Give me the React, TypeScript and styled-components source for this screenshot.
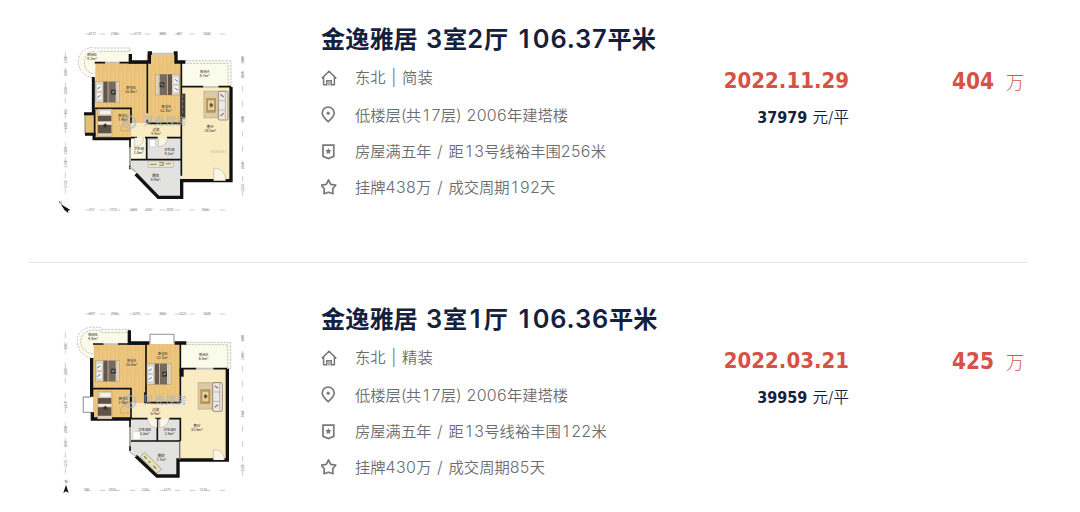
import React from "react";
import styled, { createGlobalStyle } from "styled-components";

const GlobalStyle = createGlobalStyle`
  * {
    box-sizing: border-box;
  }

  body {
    margin: 0;
    background: #fff;
    font-family: Inter, "Noto Sans CJK SC", sans-serif;
  }
`;

const Page = styled.main`
  width: 1080px;
  height: 512px;
  padding: 0 52px 0 28px;
  overflow: hidden;
`;

const Row = styled.article`
  display: flex;
  height: 263px;
  padding-left: 22px;
  border-bottom: 1px solid #e9e9e9;

  & + & {
    margin-top: 17px;
    height: 232px;
    border-bottom: 0;
  }
`;

const PlanBox = styled.svg`
  flex: none;
  width: 210px;
  height: 200px;
  margin: 20px 61px 0 0;
`;

const Info = styled.div`
  width: 378px;
  padding-top: 19px;
`;

const Title = styled.h2`
  margin: 0;
  height: 40px;
  line-height: 40px;
  color: #14213d;
  font-size: 24.2px;
  font-weight: 700;
  white-space: nowrap;
`;

const TitleLatin = styled.span`
  font-size: 25.4px;
  font-weight: 600;
  letter-spacing: 0.85px;
  word-spacing: 1px;
  white-space: pre;
`;

const Lines = styled.ul`
  display: grid;
  grid-template-rows: 37px 38px 35px 36px;
  margin: 0;
  padding: 0;
  list-style: none;
`;

const Line = styled.li`
  display: flex;
  align-items: center;
  gap: 18px;
  line-height: 24px;
  color: #6c6d70;
  font-size: 15.3px;
  font-weight: 350;
  white-space: nowrap;
`;

const LineLatin = styled.span`
  font-size: 16px;
  font-weight: 300;
  letter-spacing: 0.3px;
  word-spacing: 0.8px;
  white-space: pre;
`;

// Gives the narrow "1" the same advance as the other digits
const One = styled.span`
  display: inline-block;
  width: 0.65em;
  text-align: center;
`;

const Paren = styled.span`
  margin-right: -1px;
`;

const Icon = styled.svg`
  flex: none;
  width: 16px;
  height: 18px;
  fill: none;
  stroke: #77787a;
  stroke-width: 1.7;
`;

const Deal = styled.div`
  width: 150px;
  padding-top: 66px;
  text-align: right;
`;

const DealDate = styled.div`
  height: 30px;
  line-height: 30px;
  color: #d65247;
  font-family: "DejaVu Sans Condensed", "DejaVu Sans", sans-serif;
  font-stretch: condensed;
  font-weight: 700;
  font-size: 22px;
`;

const UnitPrice = styled.div`
  height: 44px;
  line-height: 43px;
  color: #14213d;
  font-size: 15.5px;
  font-weight: 350;

  b {
    font-family: "DejaVu Sans Condensed", "DejaVu Sans", sans-serif;
    font-stretch: condensed;
    font-size: 16px;
    font-weight: 700;
    margin-right: 1px;
  }
`;

const Total = styled.div`
  width: 175px;
  padding-top: 66px;
  line-height: 30px;
  text-align: right;
  color: #d65247;
  font-size: 18px;
  font-weight: 300;

  b {
    margin-right: 12px;
    font-family: "DejaVu Sans Condensed", "DejaVu Sans", sans-serif;
    font-stretch: condensed;
    font-size: 22.4px;
    font-weight: 700;
  }
`;

type Listing = {
  title: string;
  lines: string[];
  date: string;
  unit: string;
  total: string;
  plan: React.ReactNode;
};

const spaced = (text: string) =>
  text.split(/([1()])/).map((part, i) => {
    if (part === "1") return <One key={i}>1</One>;
    if (part === "(" || part === ")") return <Paren key={i}>{part}</Paren>;
    return part;
  });

// Latin runs are set slightly larger than the Chinese around them
const mix = (text: string, Latin: React.ElementType) =>
  text
    .split(/([\x20-\x7e]+)/)
    .filter(Boolean)
    .map((part, i) => (/^[\x20-\x7e]/.test(part) ? <Latin key={i}>{spaced(part)}</Latin> : part));

const icons = [
  <Icon viewBox="0 0 16 18" key="home">
    <path d="M.8 9.4 8 2.3l7.2 7.1M2.6 8.2v7.6h3.2M13.4 8.200v7.600h-3.200M5.800 16.400v-4.600h4.400v4.600" strokeWidth="1.5" />
    <path d="M8 13v3.400" strokeWidth="1.2" />
  </Icon>,
  <Icon viewBox="0 0 16 18" key="pin">
    <path d="M7.2 15.7C4.3 13 1.2 10.4 1.2 7a6 6 0 0 1 12 0c0 3.4-3.1 6-6 8.7Z" />
    <circle cx="7.2" cy="7.2" r="1.6" fill="#77787a" stroke="none" />
  </Icon>,
  <Icon viewBox="0 0 16 18" key="badge">
    <path d="M2 2.2h10.8v11.2l-5.4 2.2L2 13.4Z" />
    <path d="m7.4 5 .9 1.9 2.2.3-1.6 1.5.4 2.2-1.9-1-1.9 1 .4-2.2-1.6-1.5 2.2-.3Z" fill="#77787a" stroke="none" />
  </Icon>,
  <Icon viewBox="0 0 16 18" key="star">
    <path d="m7.5 2 2.2 4.4 5 .8-3 3.5.3 5-4.500-1.400L3 15.700l.3-5-3-3.500 5-.8Z" strokeLinejoin="round" />
  </Icon>,
];

const Label = ({ x, y, name, area }: { x: number; y: number; name: string; area: string }) => (
  <g fill="#40392f" fontSize="10.5" fontWeight="500" textAnchor="middle" fontFamily='"Noto Sans CJK SC", sans-serif'>
    <text x={x} y={y}>{name}</text>
    <text x={x} y={y + 12}>{area}</text>
  </g>
);

const Bed = ({ x, y, flip = false, w = 72, h = 62 }: { x: number; y: number; flip?: boolean; w?: number; h?: number }) => (
  <g transform={`translate(${flip ? x + w : x} ${y}) scale(${((flip ? -1 : 1) * w) / 72} ${h / 62})`}>
    <rect width="72" height="62" fill="#e4d8c4" stroke="#a99370" strokeWidth="1.5" />
    <rect x="2" y="7" width="18" height="22" rx="4" fill="#f8f7f2" stroke="#8b887f" />
    <rect x="2" y="33" width="18" height="22" rx="4" fill="#f8f7f2" stroke="#8b887f" />
    <path d="M5 22 14 15M5 48l9-7" stroke="#78a4b9" strokeWidth="4" />
    <rect x="23" width="13" height="62" fill="#64564a" />
    <rect x="38" width="22" height="62" fill="#756a5e" />
    <rect x="46" y="24" width="14" height="15" fill="#383634" />
    <path d="m50 34 6-6" stroke="#ddd" strokeWidth="3" />
    <path d="M64 0v62" stroke="#c9b593" strokeWidth="2" />
  </g>
);

const SmallBed = ({ y }: { y: number }) => (
  <g>
    <rect x="143" y={y} width="43" height="83" fill="#ded0bb" stroke="#927d61" />
    <rect x="149" y={y + 4} width="34" height="13" rx="3" fill="#f8f4eb" stroke="#aaa08d" />
    <path d={`M144 ${y + 20}h40v17h-40zM144 ${y + 48}h40v25h-40z`} fill="#5f5147" />
    <path d={`M144 ${y + 39}h40v5h-40z`} fill="#f3eee3" />
    <path d={`m158 ${y + 50} 8-7 7 7-7 7z`} fill="#36332f" />
  </g>
);

const Sofa = ({ x, y }: { x: number; y: number }) => (
  <g>
    <rect x={x} y={y} width="70" height="83" fill="#d0bc96" />
    <rect x={x + 4} y={y + 4} width="42" height="75" fill="#dccaa5" />
    <rect x={x + 9} y={y + 23} width="28" height="42" fill="#bd954e" stroke="#9a7a42" />
    <rect x={x + 14} y={y + 29} width="18" height="29" fill="#e5d0a0" />
    <path d={`m${x + 23} ${y + 36} 7 7-7 8-5-8z`} fill="#665032" />
    <rect x={x + 45} y={y + 2} width="29" height="86" rx="4" fill="#eee8e4" stroke="#6e6258" strokeWidth="2" />
    <path d={`M${x + 66} ${y + 4}v81M${x + 47} ${y + 30}h19M${x + 47} ${y + 58}h19`} stroke="#897c74" strokeWidth="1.5" />
    <path d={`m${x + 51} ${y + 11} 10 8M${x + 51} ${y + 76}l10-8`} stroke="#9b7770" strokeWidth="4" />
  </g>
);

const Watermark = ({ y }: { y: number }) => (
  <g fill="none" stroke="#a3b9ce" opacity=".65">
    <circle cx="239" cy={y} r="18" strokeWidth="6" />
    <path d={`m229 ${y} 9 9 17-16`} strokeWidth="5" />
    <text x="279" y={y + 8} fill="#a3b9ce" stroke="none" fontSize="30" fontWeight="700" textLength="130" fontFamily='"Noto Sans CJK SC", sans-serif'>贝壳找房</text>
  </g>
);

type Ruler = [number, string][];

const Rulers = ({ top, bottom, left, right, bottomY }: { top: Ruler; bottom: Ruler; left: Ruler; right: Ruler; bottomY: number }) => (
  <g fill="#777" fontSize="9.5" textAnchor="middle" fontFamily='"Liberation Sans", sans-serif'>
    <path
      d={`M104 42h432M104 ${bottomY}h428M46 98V543M578 108V528`}
      stroke="#999"
      strokeWidth="1.5"
      strokeDasharray="17 28"
      fill="none"
    />
    {top.map(([x, t]) => <text key={x} x={x} y="45">{t}</text>)}
    {bottom.map(([x, t]) => <text key={x} x={x} y={bottomY + 3}>{t}</text>)}
    {left.map(([y, t]) => <text key={y} transform={`translate(50 ${y}) rotate(-90)`}>{t}</text>)}
    {right.map(([y, t]) => <text key={y} transform={`translate(581 ${y}) rotate(-90)`}>{t}</text>)}
  </g>
);

const WoodDefs = ({ id }: { id: string }) => (
  <defs>
    <pattern id={id} width="24" height="70" patternUnits="userSpaceOnUse">
      <rect width="24" height="70" fill="#ebc47c" />
      <path d="M3 0v70M15 0v70" stroke="#e7bd70" strokeWidth="2" />
      <path d="M9 0v70M21 18v52" stroke="#efcb88" strokeWidth="2" />
    </pattern>
  </defs>
);

const planA = (
  <PlanBox viewBox="0 0 630 600">
    <WoodDefs id="woodA" />
    <Rulers
      top={[[127, "4172"], [193, "2283"], [263, "2179"], [338, "3885"], [389, "827"], [471, "5532"]]}
      bottom={[[126, "757"], [189, "2727"], [251, "2096"], [297, "1292"], [359, "1828"], [465, "5800"]]}
      left={[[120, "1288"], [158, "2687"], [213, "2850"], [275, "826"], [317, "2300"], [392, "1308"], [432, "2174"], [492, "2756"]]}
      right={[[120, "3800"], [165, "2028"], [298, "5880"], [437, "2528"], [503, "3254"]]}
      bottomY={570}
    />
    <path d="M132 168c-58-12-61-72 1-78h108v38H134v43Z" fill="#fbfae9" />
    <path d="M128 82c-59 4-57 85 2 91m4-80c-42 4-40 66-1 69" fill="none" stroke="#aaa" strokeWidth="2" strokeDasharray="7 3" />
    <path d="M132 84h108v10H145" fill="none" stroke="#aaa" strokeWidth="2" strokeDasharray="7 3" />
    <path d="M395 122h148v79H395Z" fill="#fbfbea" stroke="#aaa" strokeWidth="2" strokeDasharray="7 3" />
    <path d="M399 130h135v71" fill="none" stroke="#aaa" strokeWidth="2" strokeDasharray="7 3" />
    <path d="M136 128h154v182h-47v45H134v-86h2Z" fill="url(#woodA)" />
    <path d="M290 103h90v24h13v182H290Z" fill="url(#woodA)" />
    <path d="M243 310h150V202h144v278H393V354H243Z" fill="#f9ebc2" />
    <path d="M105 284h28v56h-28Z" fill="#e5be78" stroke="#8f8168" strokeWidth="3" />
    <path d="M243 355h47v64h-47Z" fill="#faf9e5" />
    <path d="M290 355h103v64H290ZM243 419h150v112h-67l-68-70-16-12Z" fill="#e2e2e1" />
    <g fill="none" stroke="#111">
      <path d="M130 171v110h-28M105 343h27v13h111" strokeWidth="9" />
      <path d="M241 102v24h57V99h8M371 99h7v27h28M543 201v281H395v50h-70l-68-70" strokeWidth="10" />
      <path d="M134 128h31m43 0h82M292 130v150m0 19v10m0 1h102V128M395 200h65m45 0h38M134 265h109v45M134 269v80M243 353h18m24 0h38m28 0h43v66m-104-65v65m-47 0h151m0-65V310m0 109v48M240 354v94" strokeWidth="5" />
    </g>
    <path d="M165 128h43M306 101h66M460 201h45M240 382v55M258 455l-18-14" stroke="#c2c0b7" strokeWidth="5" />
    <rect x="391" y="221" width="15" height="74" fill="#403a34" />
    <path d="M398 225v60" stroke="#81786b" strokeWidth="3" strokeDasharray="10 5" />
    <Bed x={137} y={185} />
    <Bed x={317} y={163} flip />
    <SmallBed y={267} />
    <Sofa x={460} y={212} />
    <path d="M491 482v-37c22-2 35 13 36 37M254 353v27c15 0 27-10 27-27M325 354v27c15-1 26-10 27-27" fill="#faf5e5" stroke="#aca38c" strokeWidth="1.5" />
    <path d="M243 302c-20 0-31 12-31 30h31" fill="none" stroke="#b3925a" strokeWidth="1.5" />
    <rect x="299" y="359" width="17" height="22" fill="#fff" stroke="#999" />
    <rect x="294" y="423" width="76" height="19" fill="#e8e4ce" stroke="#8a877a" />
    <path d="M300 433h20m8-5h12v8h-12m20-5h14" fill="none" stroke="#8b8560" strokeWidth="3" />
    <path d="M483 395h48" stroke="#c9c3ae" strokeWidth="8" strokeDasharray="3 4" />
    <Watermark y={307} />
    <Label x={126} y={107} name="阳台B" area="4.2m²" />
    <Label x={243} y={208} name="卧室B" area="15.0m²" />
    <Label x={348} y={263} name="卧室A" area="13.7m²" />
    <Label x={464} y={160} name="阳台A" area="6.7m²" />
    <Label x={219} y={291} name="卧室C" area="7.4m²" />
    <Label x={481} y={324} name="客厅" area="28.5m²" />
    <Label x={318} y={333} name="过道" area="4.9m²" />
    <Label x={266} y={391} name="卫生间" area="1.8m²" />
    <Label x={358} y={393} name="卫生间" area="4.2m²" />
    <Label x={317} y={471} name="厨房" area="8.9m²" />
    <circle cx="47" cy="566" r="15" fill="none" stroke="#ddd" />
    <path d="m32 552 29 18-7 2 1 7-11-8Z" fill="#111" />
    <text x="27" y="553" fontSize="11" fill="#333">N</text>
  </PlanBox>
);

const planB = (
  <PlanBox viewBox="0 0 630 600">
    <WoodDefs id="woodB" />
    <Rulers
      top={[[125, "1687"], [193, "2890"], [260, "1295"], [338, "2850"], [399, "1025"], [471, "5528"]]}
      bottom={[[111, "985"], [186, "2858"], [285, "2274"], [352, "1475"], [460, "5574"]]}
      left={[[137, "1807"], [215, "3508"], [314, "2470"], [389, "2880"], [432, "1067"], [490, "2275"]]}
      right={[[115, "1888"], [169, "2607"], [341, "5742"], [504, "1588"]]}
      bottomY={571}
    />
    <path d="M128 171c-58-11-60-75 3-81h107v40H131v44Z" fill="#fbfae9" />
    <path d="M154 84c-93-21-92 83-24 91M154 93c-75-19-80 61-25 69M154 88h83v10h-83" fill="none" stroke="#aaa" strokeWidth="2" strokeDasharray="7 3" />
    <path d="M391 127h151v79H391Z" fill="#fbfbea" stroke="#aaa" strokeWidth="2" strokeDasharray="7 3" />
    <path d="M405 134h128v72" fill="none" stroke="#aaa" strokeWidth="2" strokeDasharray="7 3" />
    <path d="M131 132h155v178h-43v45H129v-87h2ZM286 132h103v177H286Z" fill="url(#woodB)" />
    <path d="M243 310h146V206h141v272H389V356H243Z" fill="#f9ebc2" />
    <path d="M243 356h146v168h-68l-64-60-17-16V356Z" fill="#e2e2e1" />
    <path d="M300 131v-28h72v28M124 291h-24v46h26" fill="#fff" stroke="#a7a7a7" strokeWidth="4" />
    <g fill="none" stroke="#111">
      <path d="M125 174v116M127 337v20h116M238 91v38h60M374 129h35M532 206v274H384v48h-63l-64-60" strokeWidth="10" />
      <path d="M129 132h32m43 0h84M288 130v178h101M391 130v178M391 206h48m51 0h41M129 266h114v89M240 356h53m22 0h18m25 0h33v67M322 356v67M240 423h151M240 356v97" strokeWidth="5" />
      <path d="M395 206v24" strokeWidth="12" />
      <path d="M242 310v-28M285 309v-32" strokeWidth="5" />
    </g>
    <path d="M161 132h43M439 206h50M240 381v58M259 469l-20-14" stroke="#c2c0b7" strokeWidth="5" />
    <path d="M389 426v53" stroke="#77736b" strokeWidth="4" />
    <Bed x={137} y={182} />
    <Bed x={291} y={191} />
    <SmallBed y={274} />
    <Sofa x={443} y={246} />
    <path d="M490 480v-30c20-3 33 10 33 30M293 356c0 15 12 27 28 27v-27M329 356v27c17-1 27-11 27-27" fill="#faf5e5" stroke="#aca38c" strokeWidth="1.5" />
    <path d="M243 309c-20 0-32 12-32 30h32" fill="none" stroke="#b3925a" strokeWidth="1.5" />
    <path d="M254 395h17v23h-22v-13" fill="#fff" stroke="#aaa" />
    <path d="m284 457 51 51-15 12-49-50Z" fill="#e9e3b9" stroke="#8a877a" strokeWidth="2" />
    <path d="m282 468 8 8m6 7 5 5m9 9 9 9" stroke="#8b8560" strokeWidth="4" />
    <Watermark y={305} />
    <Label x={129} y={107} name="阳台B" area="4.8m²" />
    <Label x={245} y={187} name="卧室A" area="15.5m²" />
    <Label x={338} y={165} name="卧室B" area="12.1m²" />
    <Label x={461} y={167} name="阳台A" area="6.8m²" />
    <Label x={220} y={299} name="卧室C" area="7.4m²" />
    <Label x={441} y={380} name="客厅" area="31.6m²" />
    <Label x={317} y={333} name="过道" area="6.4m²" />
    <Label x={284} y={393} name="卫生间B" area="3.3m²" />
    <Label x={359} y={393} name="卫生间A" area="2.8m²" />
    <Label x={334} y={472} name="厨房" area="7.7m²" />
    <circle cx="48" cy="568" r="15" fill="none" stroke="#ddd" />
    <path d="m48 554 8 25-8-5-8 5Z" fill="#111" />
    <text x="44" y="550" fontSize="11" fill="#333">N</text>
  </PlanBox>
);

const listings: Listing[] = [
  {
    title: "金逸雅居 3室2厅 106.37平米",
    lines: ["东北 | 简装", "低楼层(共17层) 2006年建塔楼", "房屋满五年 / 距13号线裕丰围256米", "挂牌438万 / 成交周期192天"],
    date: "2022.11.29",
    unit: "37979",
    total: "404",
    plan: planA,
  },
  {
    title: "金逸雅居 3室1厅 106.36平米",
    lines: ["东北 | 精装", "低楼层(共17层) 2006年建塔楼", "房屋满五年 / 距13号线裕丰围122米", "挂牌430万 / 成交周期85天"],
    date: "2022.03.21",
    unit: "39959",
    total: "425",
    plan: planB,
  },
];

export default function App() {
  return (
    <>
      <GlobalStyle />
      <Page>
        {listings.map((item) => (
          <Row key={item.title}>
            {item.plan}
            <Info>
              <Title>{mix(item.title, TitleLatin)}</Title>
              <Lines>
                {item.lines.map((line, i) => (
                  <Line key={line}>
                    {icons[i]}
                    <span>{mix(line, LineLatin)}</span>
                  </Line>
                ))}
              </Lines>
            </Info>
            <Deal>
              <DealDate>{item.date}</DealDate>
              <UnitPrice>
                <b>{item.unit}</b> 元/平
              </UnitPrice>
            </Deal>
            <Total>
              <b>{item.total}</b>万
            </Total>
          </Row>
        ))}
      </Page>
    </>
  );
}
